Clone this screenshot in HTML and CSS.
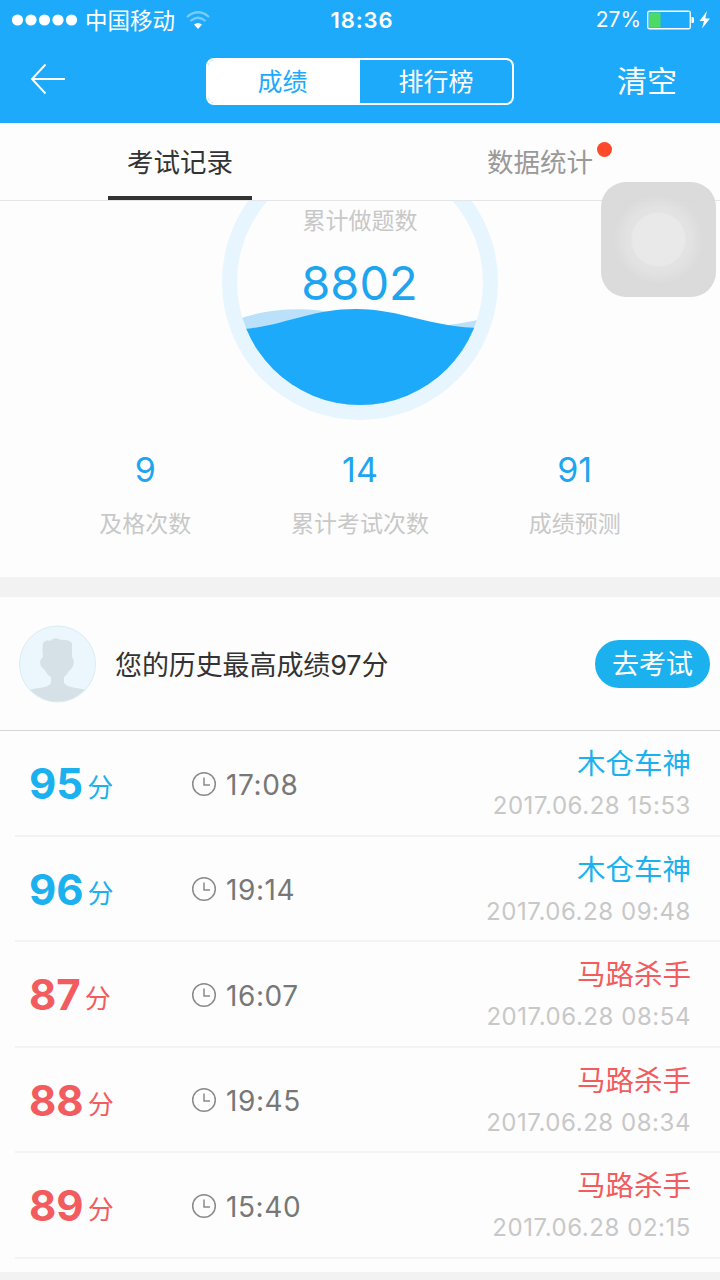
FILE: index.html
```html
<!DOCTYPE html>
<html lang="zh-CN">
<head>
    <meta charset="UTF-8">
    <title>成绩</title>
    <link rel="stylesheet" href="styles.css">
</head>
<body>
    <header class="header">
        <div class="statusBar">
            <div class="carrier">
                <svg width="66" height="12" viewBox="0 0 66 12" fill="#fff">
                    <circle cx="5.5" cy="6" r="5.6"/><circle cx="19" cy="6" r="5.6"/><circle cx="32.5" cy="6" r="5.6"/><circle cx="46" cy="6" r="5.6"/><circle cx="59.5" cy="6" r="5.6"/>
                </svg>
                <span>中国移动</span>
                <svg class="wifi" width="24" height="19" viewBox="0 0 24 19" fill="none" stroke="#fff" stroke-width="2.2">
                    <path d="M1 6Q12 -3.5 23 6" opacity=".4"/>
                    <path d="M4.5 10Q12 3.5 19.5 10" opacity=".4"/>
                    <path d="M8 13.5Q12 10.3 16 13.5L12 18Z" fill="#fff" stroke="none"/>
                </svg>
            </div>
            <div class="clock">18:36</div>
            <div class="battery">
                <span>27%</span>
                <svg width="65" height="20" viewBox="0 0 65 20">
                    <rect x=".75" y="1.25" width="42.5" height="17.5" rx="1.5" fill="none" stroke="#fff" stroke-width="1.3"/>
                    <rect x="2" y="2.5" width="11.5" height="15" fill="#4cd964"/>
                    <path d="M44.5 7h1.2q1.3 0 1.3 1.5v3q0 1.5-1.3 1.5h-1.2z" fill="#fff"/>
                    <path d="M60 1L52.5 11H57L55 18.5L63 8.5H58.3Z" fill="#fff"/>
                </svg>
            </div>
        </div>
        <div class="navBar">
            <svg class="back" width="38" height="32" viewBox="0 0 38 32" fill="none" stroke="#fff" stroke-width="1.9">
                <path d="M17.5 1.5L4 16L17.5 30.5M4 16H37"/>
            </svg>
            <div class="segment">
                <div class="segmentItem on">成绩</div>
                <div class="segmentItem">排行榜</div>
            </div>
            <div class="clear">清空</div>
        </div>
    </header>

    <nav class="tabs">
        <div class="tab active"><span>考试记录</span></div>
        <div class="tab"><span>数据统计<i class="redDot"></i></span></div>
    </nav>

    <section class="overview">
        <svg class="gauge" width="276" height="276" viewBox="0 0 276 276">
            <defs>
                <clipPath id="water"><circle cx="138" cy="138" r="123"/></clipPath>
            </defs>
            <circle cx="138" cy="138" r="130.5" fill="none" stroke="#e6f5fe" stroke-width="15"/>
            <g clip-path="url(#water)">
                <path d="M10 177C45 164 84 162 118 170C155 179 185 183 215 182C232 181 245 178 266 174V276H10Z" fill="#bbe1fa"/>
                <path d="M10 186C60 184 85 165 134 165C180 165 212 185 266 184V276H10Z" fill="#1eaafb"/>
            </g>
            <text class="gaugeLabel" x="138" y="85">累计做题数</text>
            <text class="gaugeNum" x="137.5" y="156">8802</text>
        </svg>
        <div class="stats">
            <div class="stat"><b>9</b><span>及格次数</span></div>
            <div class="stat"><b>14</b><span>累计考试次数</span></div>
            <div class="stat"><b>91</b><span>成绩预测</span></div>
        </div>
    </section>

    <section class="best">
        <svg width="78" height="78" viewBox="0 0 78 78">
            <defs>
                <clipPath id="face"><circle cx="39.5" cy="39" r="37.5"/></clipPath>
            </defs>
            <circle cx="39.5" cy="39" r="38" fill="#ebf7fc" stroke="#d9edf4" stroke-width="1"/>
            <path clip-path="url(#face)" d="M25 18Q28 14 32 16Q37 11 43 15Q50 14 54 18V32Q57 35 55 41Q53 45 51 46Q49 50 46 52V58Q49 62 58 63Q68 64 71 67V78H7V68Q11 64 21 63Q31 62 33 58V52Q29 50 27 45Q23 43 22 38Q22 34 25 32Q24 24 25 18Z" fill="#d5e1e6"/>
        </svg>
        <p class="bestText">您的历史最高成绩97分</p>
        <button class="goExam">去考试</button>
    </section>

    <ul class="records">
        <li class="row good">
            <div class="score"><b>95</b>分</div>
            <div class="time"><svg class="timeIcon" viewBox="0 0 26 26"><circle cx="13" cy="13" r="11.3"/><path d="M13 6.5V14H19"/></svg><span>17:08</span></div>
            <div class="info"><p class="rank">木仓车神</p><p class="date">2017.06.28 15:53</p></div>
        </li>
        <li class="row good">
            <div class="score"><b>96</b>分</div>
            <div class="time"><svg class="timeIcon" viewBox="0 0 26 26"><circle cx="13" cy="13" r="11.3"/><path d="M13 6.5V14H19"/></svg><span>19:14</span></div>
            <div class="info"><p class="rank">木仓车神</p><p class="date">2017.06.28 09:48</p></div>
        </li>
        <li class="row bad">
            <div class="score"><b>87</b>分</div>
            <div class="time"><svg class="timeIcon" viewBox="0 0 26 26"><circle cx="13" cy="13" r="11.3"/><path d="M13 6.5V14H19"/></svg><span>16:07</span></div>
            <div class="info"><p class="rank">马路杀手</p><p class="date">2017.06.28 08:54</p></div>
        </li>
        <li class="row bad">
            <div class="score"><b>88</b>分</div>
            <div class="time"><svg class="timeIcon" viewBox="0 0 26 26"><circle cx="13" cy="13" r="11.3"/><path d="M13 6.5V14H19"/></svg><span>19:45</span></div>
            <div class="info"><p class="rank">马路杀手</p><p class="date">2017.06.28 08:34</p></div>
        </li>
        <li class="row bad">
            <div class="score"><b>89</b>分</div>
            <div class="time"><svg class="timeIcon" viewBox="0 0 26 26"><circle cx="13" cy="13" r="11.3"/><path d="M13 6.5V14H19"/></svg><span>15:40</span></div>
            <div class="info"><p class="rank">马路杀手</p><p class="date">2017.06.28 02:15</p></div>
        </li>
    </ul>

    <div class="assistiveTouch"></div>
</body>
</html>
```
FILE: styles.css
```css
* {
    box-sizing: border-box;
}
body {
    font-family: Inter, 'Noto Sans CJK SC', sans-serif;
    font-weight: 400;
    margin: 0;
    height: 1280px;
    overflow: hidden;
    background: #f2f2f2;
}
p, ul {
    margin: 0;
    padding: 0;
    list-style: none;
}
svg {
    display: block;
    flex: none;
}

/* header */
.header {
    height: 123px;
    background: #1eaafb;
    color: #fff;
}
.statusBar {
    display: grid;
    grid-template-columns: 1fr auto 1fr;
    align-items: center;
    height: 40px;
    padding: 0 8px 0 12px;
    font-size: 22.5px;
    line-height: 40px;
}
.carrier, .battery {
    display: flex;
    align-items: center;
}
.carrier {
    gap: 7px;
}
.carrier span {
    padding-top: 2px;
    line-height: 38px;
}
.wifi {
    margin-left: 4px;
}
.clock {
    font-size: 22px;
    font-weight: 600;
    letter-spacing: 0.9px;
}
.battery {
    justify-content: flex-end;
    gap: 6px;
    font-size: 21px;
}
.navBar {
    display: grid;
    grid-template-columns: 1fr 308px 1fr;
    align-items: center;
    height: 82px;
    padding: 0 28px;
}
.back {
    margin-top: -4px;
}
.segment {
    display: flex;
    height: 47px;
    border: 2px solid #fff;
    border-radius: 8px;
    overflow: hidden;
}
.segmentItem {
    width: 50%;
    font-size: 25px;
    line-height: 44px;
    text-align: center;
}
.segmentItem.on {
    padding-right: 3px;
    background: #fff;
    color: #1eaafb;
}
.clear {
    margin-right: 15px;
    padding-bottom: 4px;
    font-size: 30px;
    text-align: right;
}

/* tabs */
.tabs {
    display: flex;
    height: 78px;
    background: #fdfdfd;
    border-bottom: 1px solid #e3e5e6;
}
.tab {
    display: flex;
    justify-content: center;
    flex: 1;
    font-size: 26.5px;
    line-height: 78px;
    color: #999;
}
.tab span {
    position: relative;
}
.tab.active span {
    width: 144px;
    height: 77px;
    text-align: center;
    color: #333;
    border-bottom: 4px solid #333;
}
.redDot {
    position: absolute;
    top: 19px;
    right: -19px;
    width: 15px;
    height: 15px;
    border-radius: 50%;
    background: #fc4a2b;
}

/* overview */
.overview {
    height: 376px;
    overflow: hidden;
    background: #fdfdfd;
}
.gauge {
    margin: -57px auto 0;
}
.gaugeLabel, .gaugeNum {
    text-anchor: middle;
}
.gaugeLabel {
    font-size: 23px;
    fill: #c8c8c8;
}
.gaugeNum {
    font-size: 47px;
    fill: #1ea5f0;
}
.stats {
    display: flex;
    padding: 27px 38px 0;
}
.stat {
    flex: 1;
    display: flex;
    flex-direction: column;
    align-items: center;
}
.stat b {
    font-size: 34px;
    font-weight: 400;
    line-height: 46px;
    color: #1ea5f0;
}
.stat span {
    margin-top: 14px;
    font-size: 23px;
    line-height: 34px;
    color: #c8c8c8;
}

/* best score */
.best {
    display: flex;
    align-items: center;
    height: 134px;
    margin-top: 20px;
    padding: 0 10px 0 18px;
    background: #fdfdfd;
    border-bottom: 1px solid #d4d6d8;
}
.bestText {
    flex: 1;
    margin-left: 19px;
    font-size: 27px;
    letter-spacing: -0.1px;
    color: #333;
}
.goExam {
    width: 115px;
    height: 48px;
    padding: 2px 0 0;
    border: none;
    border-radius: 24px;
    background: #1bb1ef;
    color: #fff;
    font: inherit;
    font-size: 27px;
    line-height: 46px;
}

/* records */
.records {
    height: 541px;
    padding-left: 15px;
    background: #fdfdfd;
}
.row {
    display: flex;
    height: 105.5px;
    padding: 0 29px 0 14px;
    border-bottom: 2px solid #f3f3f4;
}
.score {
    display: flex;
    width: 162px;
    font-size: 26px;
    line-height: 114px;
}
.score b {
    margin-right: 4px;
    font-size: 42px;
    font-weight: 700;
    line-height: 105px;
}
.time {
    display: flex;
    align-items: center;
    flex: 1;
    padding-top: 2px;
    font-size: 28px;
    letter-spacing: 0.6px;
    color: #777;
}
.time span {
    padding-top: 2px;
}
.timeIcon {
    width: 26px;
    height: 26px;
    margin-right: 9px;
    fill: none;
    stroke: #8a8a8a;
    stroke-width: 1.5;
}
.info {
    padding-top: 12px;
    text-align: right;
}
.rank {
    font-size: 28.5px;
    line-height: 42px;
}
.date {
    font-size: 24px;
    line-height: 41px;
    letter-spacing: 0.55px;
    color: #c8c8c8;
}
.good .score, .good .rank {
    color: #1bb1ef;
}
.bad .score, .bad .rank {
    color: #f25c5e;
}

/* floating home button */
.assistiveTouch {
    position: absolute;
    top: 182px;
    left: 601px;
    width: 115px;
    height: 115px;
    border-radius: 25px;
    background: radial-gradient(circle, rgba(232, 232, 232, 0.96) 0 26px, rgba(225, 225, 225, 0.95) 28px, rgba(225, 225, 225, 0.95) 32px, rgba(217, 217, 217, 0.95) 45px);
}
```
